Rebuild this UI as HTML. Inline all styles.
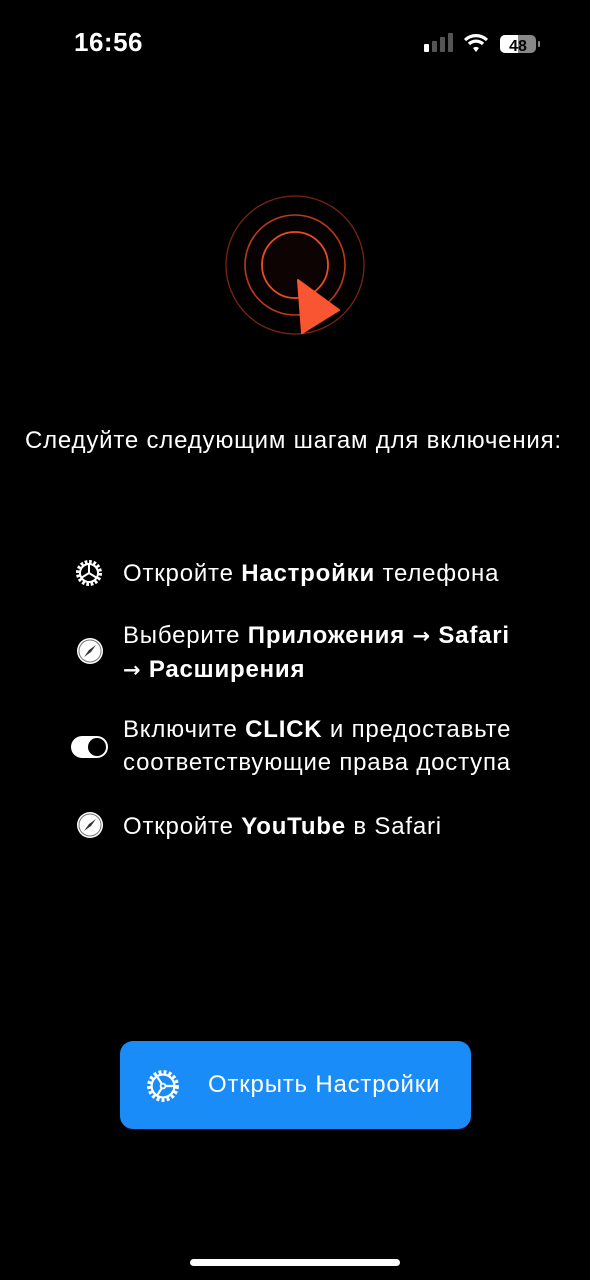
<!DOCTYPE html>
<html><head><meta charset="utf-8"><style>
body{margin:0;width:590px;height:1280px;background:#000;color:#fff;font-family:"Liberation Sans",Arial,sans-serif;position:relative;overflow:hidden}
.a{position:absolute}
.t{font-size:24px;line-height:33px;white-space:nowrap;letter-spacing:0.8px}
b{font-weight:bold}
.ar{font-family:"DejaVu Sans",sans-serif;font-weight:bold;font-size:21px}
</style></head><body>
<div class="a" style="left:74px;top:27px;font-size:26px;font-weight:bold;letter-spacing:0.5px">16:56</div>
<svg class="a" style="left:420px;top:32px" width="125" height="24">
<rect x="4" y="12" width="5" height="8" rx="1" fill="#fff"/>
<rect x="12" y="9" width="5" height="11" rx="1" fill="#555"/>
<rect x="20" y="5" width="5" height="15" rx="1" fill="#555"/>
<rect x="28" y="1" width="5" height="19" rx="1" fill="#555"/>
<path d="M45 8 A16 16 0 0 1 67 8" stroke="#fff" stroke-width="3.2" fill="none"/>
<path d="M49 12 A10 10 0 0 1 63 12" stroke="#fff" stroke-width="3.2" fill="none"/>
<path d="M53 16 L56 20 L59 16 A5 5 0 0 0 53 16Z" fill="#fff"/>
<rect x="80" y="3" width="36" height="18" rx="5" fill="#888"/>
<path d="M85 3 H98 V21 H85 A5 5 0 0 1 80 16 V8 A5 5 0 0 1 85 3Z" fill="#fff"/>
<rect x="118" y="9" width="2" height="6" rx="1" fill="#888"/>
<text x="98" y="19" font-size="16" font-weight="bold" text-anchor="middle" fill="#000" font-family="Liberation Sans">48</text>
</svg>
<svg class="a" style="left:195px;top:165px" width="200" height="200">
<defs><radialGradient id="g"><stop offset="0.3" stop-color="#0c0302"/><stop offset="1" stop-color="#000" stop-opacity="0"/></radialGradient></defs>
<circle cx="100" cy="100" r="85" fill="url(#g)"/>
<circle cx="100" cy="100" r="69" fill="none" stroke="#7a2512" stroke-width="1.3"/>
<circle cx="100" cy="100" r="50" fill="none" stroke="#b83a1c" stroke-width="1.6"/>
<circle cx="100" cy="100" r="33" fill="none" stroke="#e84c26" stroke-width="1.8"/>
<path d="M103 115 L144 145 L107 168 Z" fill="#fa5532" stroke="#fa5532" stroke-width="2" stroke-linejoin="round"/>
</svg>
<div class="a t" style="left:25px;top:424px">Следуйте следующим шагам для включения:</div>
<svg class="a" style="left:74px;top:558px" width="30" height="30" viewBox="0 0 30 30">
<circle cx="15" cy="15" r="11" fill="none" stroke="#fff" stroke-width="4" stroke-dasharray="2.6 1.7"/>
<circle cx="15" cy="15" r="9" fill="none" stroke="#fff" stroke-width="2"/>
<path d="M15 15 L15 6 M15 15 L7 20 M15 15 L23 20" stroke="#fff" stroke-width="2"/>
</svg>
<div class="a t" style="left:123px;top:557px">Откройте <b>Настройки</b> телефона</div>
<svg class="a" style="left:75px;top:636px" width="30" height="30"><circle cx="15" cy="15" r="13" fill="#fff"/><circle cx="15" cy="15" r="11" fill="none" stroke="#777" stroke-width="1"/><path d="M21 9 L16 16 L9 21 L14 14Z" fill="#333"/></svg>
<div class="a t" style="left:123px;top:619px">Выберите <b>Приложения <span class="ar">→</span> Safari</b><br><b><span class="ar">→</span> Расширения</b></div>
<svg class="a" style="left:71px;top:735px" width="38" height="24"><rect x="0" y="1" width="37" height="22" rx="11" fill="#fff"/><circle cx="26" cy="12" r="9" fill="#000"/></svg>
<div class="a t" style="left:123px;top:713px">Включите <b>CLICK</b> и предоставьте<br>соответствующие права доступа</div>
<svg class="a" style="left:75px;top:810px" width="30" height="30"><circle cx="15" cy="15" r="13" fill="#fff"/><circle cx="15" cy="15" r="11" fill="none" stroke="#777" stroke-width="1"/><path d="M21 9 L16 16 L9 21 L14 14Z" fill="#333"/></svg>
<div class="a t" style="left:123px;top:810px">Откройте <b>YouTube</b> в Safari</div>
<div class="a" style="left:120px;top:1041px;width:351px;height:88px;background:#1a8cf7;border-radius:13px"></div>
<svg class="a" style="left:145px;top:1068px" width="36" height="36" viewBox="0 0 30 30">
<circle cx="15" cy="15" r="11.5" fill="none" stroke="#fff" stroke-width="3.5" stroke-dasharray="2.4 1.8"/>
<circle cx="15" cy="15" r="9.5" fill="none" stroke="#fff" stroke-width="1.8"/>
<circle cx="15" cy="15" r="2" fill="none" stroke="#fff" stroke-width="1.5"/>
<path d="M17 15 L24 15 M14 13.3 L10 7 M14 16.7 L10 23" stroke="#fff" stroke-width="1.8"/>
</svg>
<div class="a" style="left:208px;top:1069px;font-size:24px;line-height:32px;letter-spacing:0.8px">Открыть Настройки</div>
<div class="a" style="left:190px;top:1259px;width:210px;height:7px;border-radius:4px;background:#fff"></div>
</body></html>
